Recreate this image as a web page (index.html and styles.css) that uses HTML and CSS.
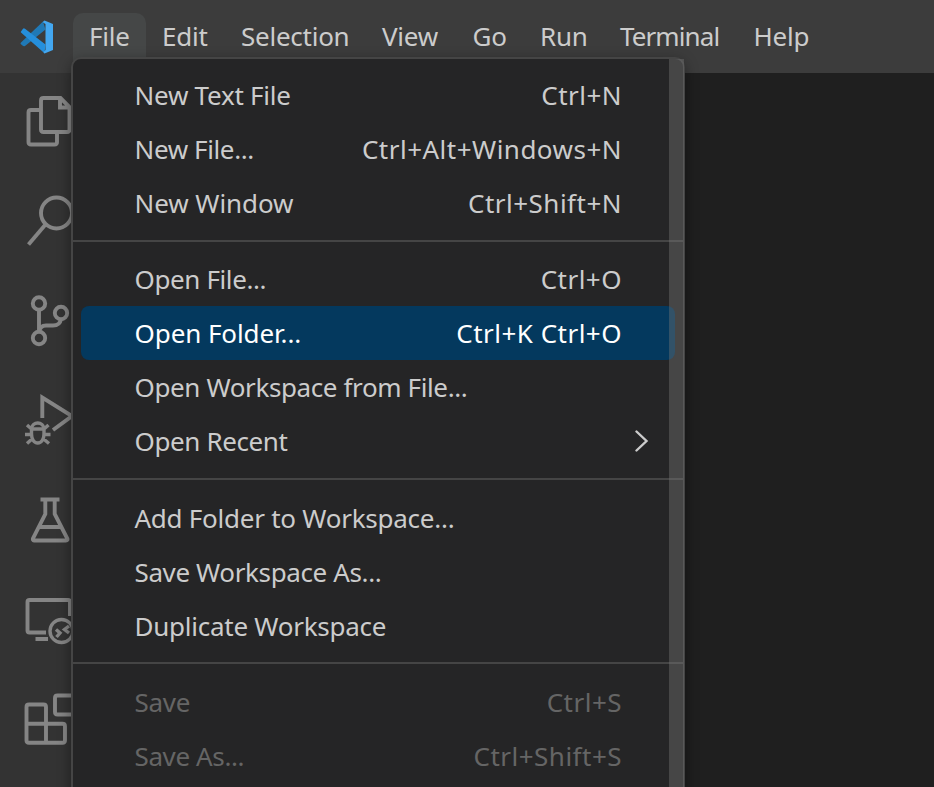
FILE: index.html
```
<!DOCTYPE html>
<html lang="en">
<head>
<meta charset="utf-8">
<title>Visual Studio Code</title>
<link rel="stylesheet" href="styles.css">
</head>
<body>
<header class="titlebar">
  <svg class="logo" viewBox="0 0 34 34" aria-hidden="true">
    <path fill="#2079b6" d="M1 22.500 23 1.500 25.500 9.500 5 26Q3.500 26.700 2.500 25.500L.7 23.900Q.2 23.200 1 22.500Z"/>
    <path fill="#258fdc" d="M1 11.500 3 8.700Q4 8 5 8.800L25.500 24.500 24.500 33.200 1 12.500Q.5 12 1 11.500Z"/>
    <path fill="#43a7f0" d="M24.500 .5 33 4V30L24.500 33.500Q23 33 24 31.500L25.500 30V4L23 2.500Q23 .8 24.500 .5Z"/>
  </svg>
  <nav class="menubar">
    <span class="menu-title active">File</span>
    <span class="menu-title">Edit</span>
    <span class="menu-title tight">Selection</span>
    <span class="menu-title">View</span>
    <span class="menu-title">Go</span>
    <span class="menu-title">Run</span>
    <span class="menu-title tighter">Terminal</span>
    <span class="menu-title">Help</span>
  </nav>
</header>
<main class="workbench">
  <aside class="activitybar">
    <svg class="action" viewBox="0 0 72 100"><path d="M43.500 25H60.500L69.500 34V56.500Q69.500 59 67 59H43.500Q41 59 41 56.500V27.500Q41 25 43.500 25ZM60 25V34.500H69.500M41 37H31Q28.500 37 28.500 39.500V69Q28.500 71.500 31 71.500H54.500Q57 71.500 57 69V60"/></svg>
    <svg class="action" viewBox="0 0 72 100"><circle cx="56.500" cy="40" r="15.500"/><path d="M45.500 51.500 28.500 71.500"/></svg>
    <svg class="action" viewBox="0 0 72 100"><circle cx="39" cy="30.500" r="6.200"/><circle cx="61" cy="40" r="6.200"/><circle cx="39" cy="65" r="6.200"/><path d="M39 37V59Q40 52.500 46 52.500H53Q60 52.500 61 46"/></svg>
    <svg class="action" viewBox="0 0 72 100"><path d="M42.300 45V24.500L72 43 53 57"/><g class="fine"><path d="M31.500 55.500A6.300 6.300 0 0 1 44 55.500V61C44 66 41.500 70 37.700 70S31.500 66 31.500 61ZM31.500 56H44M25 61.500H31M44.500 61.500H50.500M27 52 31.500 56M48.500 52 44 56M27 70.500 32.500 65.500M49 70.500 43 65.500"/></g></svg>
    <svg class="action" viewBox="0 0 72 100"><path d="M40.500 26.500H59.500M45.300 27V41L33 65.500Q32.500 67.500 34 67.500H66Q68 67.500 67.300 65.500L54.700 41V27M38.500 54H62"/></svg>
    <svg class="action" viewBox="0 0 72 100"><path d="M70 43V29Q70 27 68 27H29.500Q27.500 27 27.500 29V57.500Q27.500 59.500 29.500 59.500H46M35.500 66H48"/><circle class="fine" cx="61.500" cy="58" r="11.500"/><path class="fine" d="M56 56.500 60 60 56.500 64M69 53 64.500 56.500 69 60"/></svg>
    <svg class="action" viewBox="0 0 72 100"><path d="M29 31.500H43.500Q46 31.500 46 34V50.700H62.500Q65 50.700 65 53.200V67.200Q65 69.700 62.500 69.700H29Q26.500 69.700 26.500 67.200V34Q26.500 31.500 29 31.500ZM26.500 50.700H46V69.700M76 22.500H57.500Q55 22.500 55 25V39Q55 41.500 57.500 41.500H76"/></svg>
  </aside>
  <section class="editor"></section>
</main>
<div class="menu">
  <div class="item"><span class="label">New Text File</span><span class="keys">Ctrl+N</span></div>
  <div class="item"><span class="label tight">New File...</span><span class="keys">Ctrl+Alt+Windows+N</span></div>
  <div class="item"><span class="label wide">New Window</span><span class="keys">Ctrl+Shift+N</span></div>
  <div class="separator"></div>
  <div class="item"><span class="label tight">Open File...</span><span class="keys">Ctrl+O</span></div>
  <div class="item selected"><span class="label wide">Open Folder...</span><span class="keys">Ctrl+K Ctrl+O</span></div>
  <div class="item"><span class="label tight">Open Workspace from File...</span></div>
  <div class="item submenu"><span class="label tight">Open Recent</span><svg class="chevron" viewBox="0 0 14 22"><path d="M1.500 1.500 11.500 11 1.500 20.500"/></svg></div>
  <div class="separator"></div>
  <div class="item"><span class="label">Add Folder to Workspace...</span></div>
  <div class="item"><span class="label tight">Save Workspace As...</span></div>
  <div class="item"><span class="label">Duplicate Workspace</span></div>
  <div class="separator last"></div>
  <div class="item disabled"><span class="label">Save</span><span class="keys">Ctrl+S</span></div>
  <div class="item disabled"><span class="label tight">Save As...</span><span class="keys">Ctrl+Shift+S</span></div>
  <div class="scrollbar"></div>
</div>
</body>
</html>
```
FILE: styles.css
```
* { box-sizing: border-box; }

body {
  margin: 0;
  height: 787px;
  overflow: hidden;
  position: relative;
  display: flex;
  flex-direction: column;
  background: #1f1f1f;
  color: #cccccc;
  font: 26px/34px "Noto Sans", "Open Sans", sans-serif;
  white-space: nowrap;
}

.titlebar {
  flex: none;
  display: flex;
  height: 73px;
  padding: 13px 0 0 20px;
  background: #3c3c3c;
}

.logo {
  width: 34px;
  height: 34px;
  margin: 7px 19px 0 0;
}

.menubar {
  display: grid;
  grid-template-columns: 73px 79px 141px 90.5px 67.500px 80px 133.5px 90px;
}

.menu-title {
  height: 60px;
  padding: 6px 0 0 16px;
  border-radius: 10px;
  letter-spacing: -0.25px;
}

.menu-title.active { background: #454747; }

.workbench {
  flex: 1;
  display: flex;
  min-height: 0;
}

.activitybar {
  width: 72px;
  flex: none;
  background: #333333;
}

.action {
  display: block;
  width: 72px;
  height: 100px;
  fill: none;
  stroke: #858585;
  stroke-width: 3.9;
}

.fine { stroke-width: 3.4; }

.editor { flex: 1; }

.menu {
  position: absolute;
  top: 57px;
  left: 71px;
  width: 614px;
  height: 760px;
  padding: 9px 8px 0;
  background: #252526;
  border: 2px solid #454545;
  border-radius: 10px;
  box-shadow: 0 4px 14px rgba(0, 0, 0, 0.4);
}

.item {
  display: flex;
  justify-content: space-between;
  height: 54px;
  padding: 10px 53px 0 53.5px;
  border-radius: 8px;
}

.label { letter-spacing: -0.25px; }
.label.tight { letter-spacing: -0.38px; }
.label.wide { letter-spacing: -0.08px; }
.menu-title.tighter { letter-spacing: -0.9px; }
.keys { letter-spacing: 0.48px; }

.selected {
  width: 594px;
  padding-right: 53px;
  background: #04395e;
  color: #ffffff;
}

.disabled { color: #656565; }

.submenu { padding-right: 26.5px; }

.chevron {
  width: 14px;
  height: 22px;
  margin-top: 5.5px;
  fill: none;
  stroke: #cccccc;
  stroke-width: 2.4;
  stroke-linecap: round;
}

.separator {
  height: 22.4px;
  margin: 0 -8px;
  padding-top: 10px;
}

.separator.last { padding-top: 9px; }

.separator::before {
  content: "";
  display: block;
  height: 2px;
  background: #454545;
}

.scrollbar {
  position: absolute;
  top: 0;
  right: -1px;
  bottom: 0;
  width: 15px;
  background: rgba(121, 121, 121, 0.4);
}
```
